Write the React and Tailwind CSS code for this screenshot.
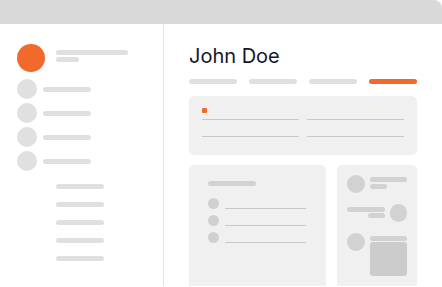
const sideItems = [1, 2, 3, 4]
const subItems = [1, 2, 3, 4, 5]
const tabs = [false, false, false, true]

function Bar({ className }) {
  return <div className={`h-[5px] rounded-full ${className}`} />
}

function Sidebar() {
  return (
    <div className="w-[164px] shrink-0 border-r border-[#e3e3e3] pt-5 pl-[17px]">
      <div className="flex items-start gap-[11px]">
        <div className="w-7 h-7 rounded-full bg-[#f26a2b]" />
        <div className="pt-1.5 flex flex-col gap-[2px]">
          <Bar className="w-[72px] bg-[#e0e0e0]" />
          <Bar className="w-[23px] bg-[#e0e0e0]" />
        </div>
      </div>
      <div className="mt-[7px] flex flex-col gap-1">
        {sideItems.map((i) => (
          <div key={i} className="flex items-center gap-1.5">
            <div className="w-5 h-5 rounded-full bg-[#e0e0e0]" />
            <Bar className="w-12 bg-[#e0e0e0]" />
          </div>
        ))}
      </div>
      <div className="mt-[13px] pl-[39px] flex flex-col gap-[13px]">
        {subItems.map((i) => (
          <Bar key={i} className="w-12 bg-[#e0e0e0]" />
        ))}
      </div>
    </div>
  )
}

function Summary() {
  return (
    <div className="mt-3 h-[59px] rounded-[5px] bg-[#f0f0f0] px-[13px] pt-3">
      <div className="w-[5px] h-[5px] rounded-[1px] bg-[#f26a2b]" />
      <div className="mt-1.5 grid grid-cols-2 gap-x-2 gap-y-4">
        <div className="h-px bg-[#c8c8c8]" />
        <div className="h-px bg-[#c8c8c8]" />
        <div className="h-px bg-[#c8c8c8]" />
        <div className="h-px bg-[#c8c8c8]" />
      </div>
    </div>
  )
}

function ListCard() {
  return (
    <div className="w-[137px] h-[121px] rounded-t-[5px] bg-[#f0f0f0] pl-[19px] pt-4">
      <Bar className="w-12 bg-[#d2d2d2]" />
      <div className="mt-3 flex flex-col gap-1.5">
        {[1, 2, 3].map((i) => (
          <div key={i} className="flex items-end gap-1.5">
            <div className="w-[11px] h-[11px] rounded-full bg-[#d0d0d0]" />
            <div className="w-[81px] h-px bg-[#c8c8c8]" />
          </div>
        ))}
      </div>
    </div>
  )
}

function MediaCard() {
  return (
    <div className="w-20 h-[121px] rounded-t-[5px] bg-[#f0f0f0] p-2.5">
      <div className="flex items-start gap-[5px]">
        <div className="w-[18px] h-[18px] rounded-full bg-[#d2d2d2]" />
        <div className="pt-0.5 flex flex-col gap-[2px]">
          <Bar className="w-[37px] bg-[#d2d2d2]" />
          <Bar className="w-[17px] bg-[#d2d2d2]" />
        </div>
      </div>
      <div className="mt-[11px] flex items-start justify-end gap-[5px]">
        <div className="pt-[3px] flex flex-col items-end gap-[1px]">
          <Bar className="w-[38px] bg-[#d2d2d2]" />
          <Bar className="w-[17px] bg-[#d2d2d2]" />
        </div>
        <div className="w-[18px] h-[18px] rounded-full bg-[#d2d2d2]" />
      </div>
      <div className="mt-[11px] flex items-start gap-[5px]">
        <div className="w-[18px] h-[18px] rounded-full bg-[#d2d2d2]" />
        <div className="pt-[3px] flex flex-col gap-[1px]">
          <Bar className="w-[37px] bg-[#d2d2d2]" />
          <div className="w-[37px] h-[34px] rounded-[3px] bg-[#cccccc]" />
        </div>
      </div>
    </div>
  )
}

export default function App() {
  return (
    <div className="w-[442px] h-[287px] bg-white overflow-hidden" style={{ fontFamily: 'Inter, "Liberation Sans", sans-serif' }}>
      <div className="h-6 bg-[#d9d9d9] rounded-tr-lg" />
      <div className="flex h-[262px]">
        <Sidebar />
        <div className="flex-1 pl-[25px] pt-[18px]">
          <div className="text-[20px] leading-7 text-[#16162a]">John Doe</div>
          <div className="mt-[9px] flex gap-3">
            {tabs.map((active, i) => (
              <Bar key={i} className={`w-12 ${active ? 'bg-[#f26a2b]' : 'bg-[#e0e0e0]'}`} />
            ))}
          </div>
          <div className="w-[228px]">
            <Summary />
            <div className="mt-2.5 flex gap-[11px]">
              <ListCard />
              <MediaCard />
            </div>
          </div>
        </div>
      </div>
    </div>
  )
}
